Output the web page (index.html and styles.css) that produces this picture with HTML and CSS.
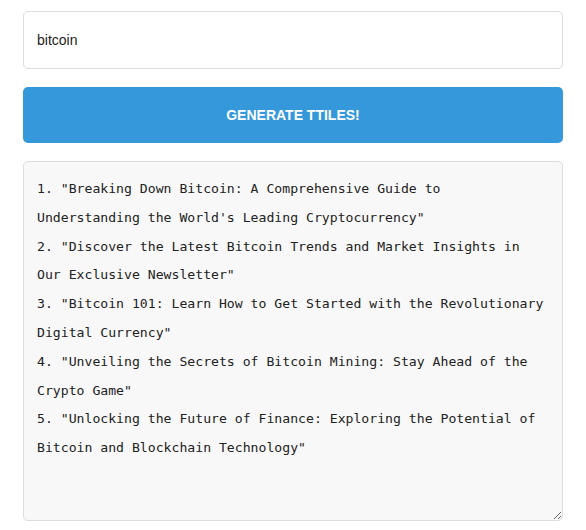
FILE: index.html
```html
<!DOCTYPE html>
<html lang="en">
<head>
    <meta charset="UTF-8">
    <meta name="viewport" content="width=device-width, initial-scale=1.0">
    <title>Title Generator</title>
    <link rel="stylesheet" href="styles.css">
</head>
<body>
    <div class="container">
        <input type="text" class="topic-input" value="bitcoin">
        <button class="generate-btn">GENERATE TTILES!</button>
        <textarea class="result-box" readonly>1. "Breaking Down Bitcoin: A Comprehensive Guide to Understanding the World's Leading Cryptocurrency"
2. "Discover the Latest Bitcoin Trends and Market Insights in Our Exclusive Newsletter"
3. "Bitcoin 101: Learn How to Get Started with the Revolutionary Digital Currency"
4. "Unveiling the Secrets of Bitcoin Mining: Stay Ahead of the Crypto Game"
5. "Unlocking the Future of Finance: Exploring the Potential of Bitcoin and Blockchain Technology"</textarea>
    </div>
</body>
</html>
```

FILE: styles.css
```css
* {
    margin: 0;
    padding: 0;
    box-sizing: border-box;
}

body {
    background-color: #fff;
    font-family: 'Liberation Sans', Arial, sans-serif;
}

.container {
    display: flex;
    flex-direction: column;
    gap: 18px;
    padding: 11px 23px;
}

.topic-input {
    width: 100%;
    height: 58px;
    padding: 0 13px;
    border: 1px solid #ddd;
    border-radius: 5px;
    font-family: 'Liberation Sans', Arial, sans-serif;
    font-size: 14px;
    color: #222;
    outline: none;
}

.generate-btn {
    width: 100%;
    height: 56px;
    border: none;
    border-radius: 5px;
    background-color: #3498db;
    color: #fff;
    font-family: 'Liberation Sans', Arial, sans-serif;
    font-size: 14px;
    font-weight: bold;
    cursor: pointer;
}

.result-box {
    width: 100%;
    height: 360px;
    padding: 13px 14px 12px 13px;
    border: 1px solid #ddd;
    border-radius: 5px;
    background-color: #f8f8f8;
    color: #222;
    font-family: 'DejaVu Sans Mono', monospace;
    font-size: 13.15px;
    line-height: 28.8px;
    resize: vertical;
    outline: none;
}
```
